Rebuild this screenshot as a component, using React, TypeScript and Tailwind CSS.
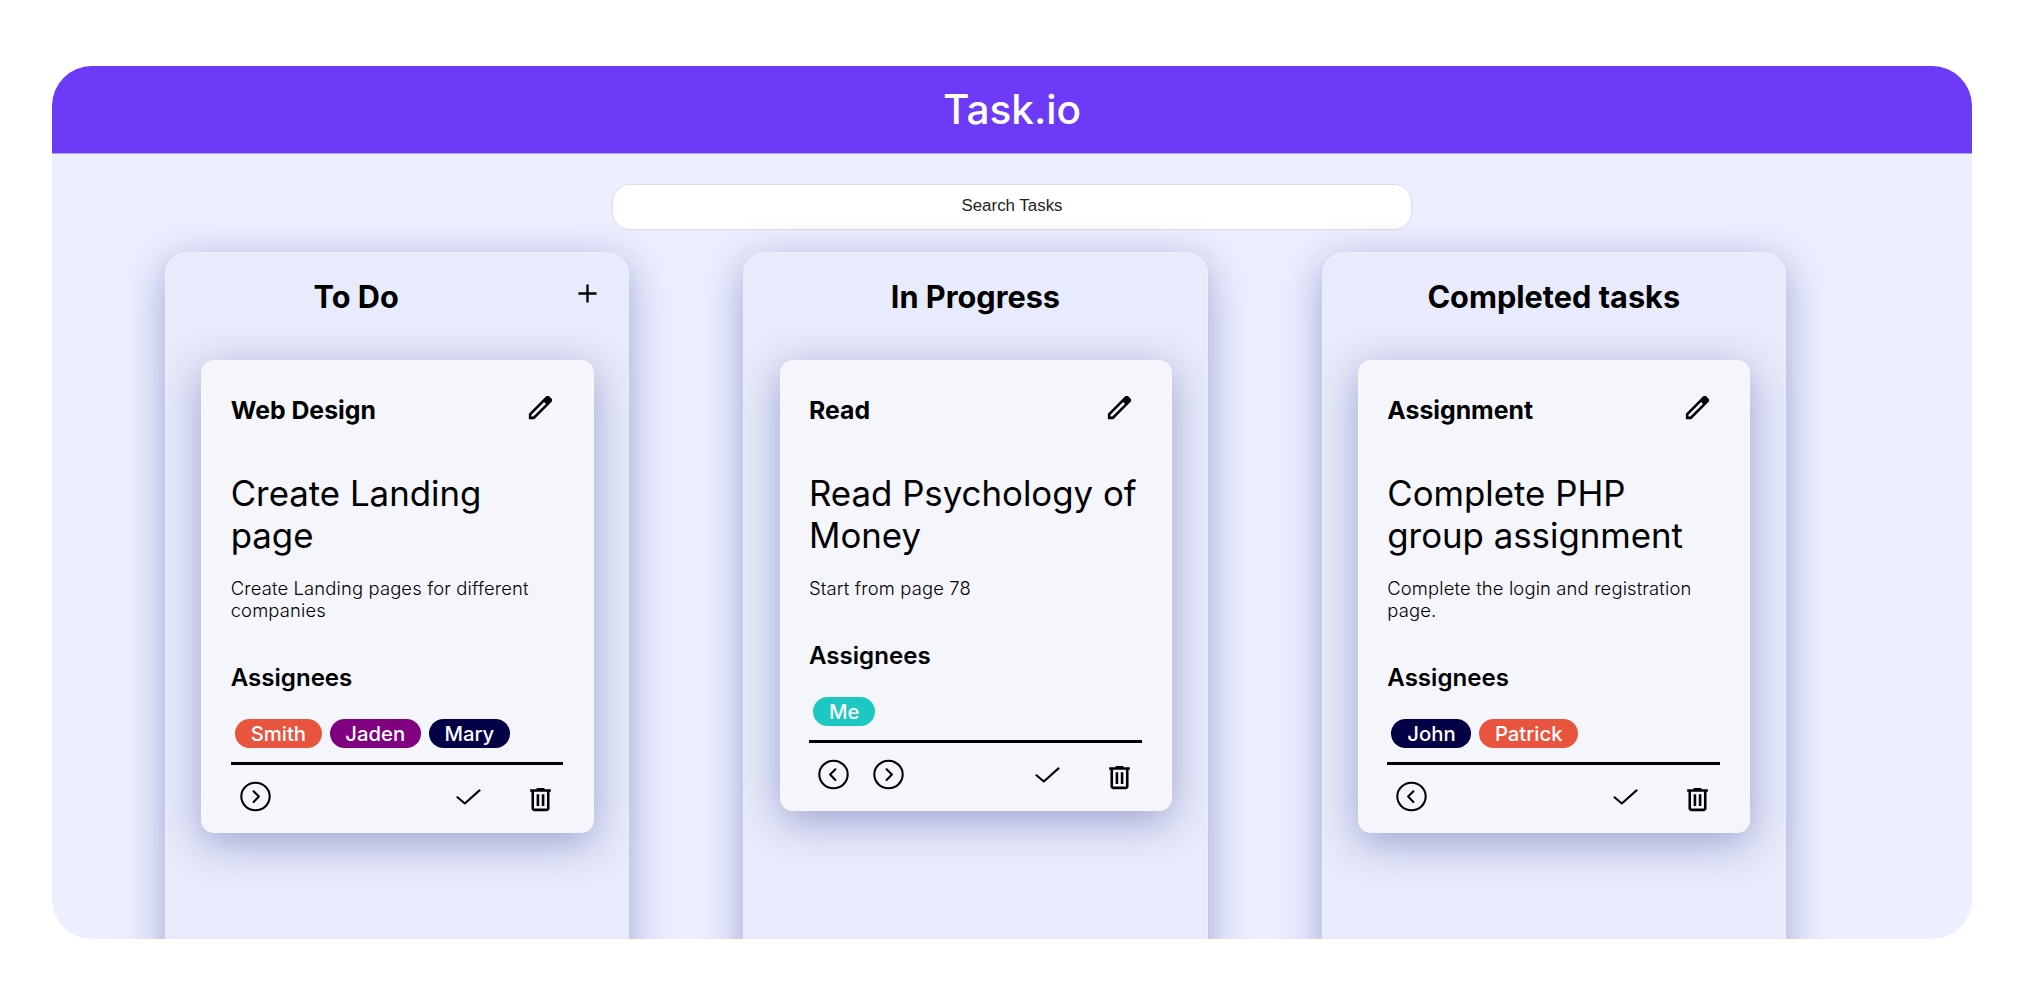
type Assignee = { name: string; tone: keyof typeof tones };
type Task = {
  category: string;
  title: string;
  details: string;
  assignees: Assignee[];
  back: boolean;
  forward: boolean;
};
type Column = { title: string; canAdd: boolean; tasks: Task[] };

const tones = {
  orange: 'bg-[#e9543f]',
  purple: 'bg-[#800080]',
  navy: 'bg-[#040045]',
  teal: 'bg-[#1cc8c1]',
};

const columns: Column[] = [
  {
    title: 'To Do',
    canAdd: true,
    tasks: [
      {
        category: 'Web Design',
        title: 'Create Landing page',
        details: 'Create Landing pages for different companies',
        assignees: [
          { name: 'Smith', tone: 'orange' },
          { name: 'Jaden', tone: 'purple' },
          { name: 'Mary', tone: 'navy' },
        ],
        back: false,
        forward: true,
      },
    ],
  },
  {
    title: 'In Progress',
    canAdd: false,
    tasks: [
      {
        category: 'Read',
        title: 'Read Psychology of Money',
        details: 'Start from page 78',
        assignees: [{ name: 'Me', tone: 'teal' }],
        back: true,
        forward: true,
      },
    ],
  },
  {
    title: 'Completed tasks',
    canAdd: false,
    tasks: [
      {
        category: 'Assignment',
        title: 'Complete PHP group assignment',
        details: 'Complete the login and registration page.',
        assignees: [
          { name: 'John', tone: 'navy' },
          { name: 'Patrick', tone: 'orange' },
        ],
        back: true,
        forward: false,
      },
    ],
  },
];

function PlusIcon() {
  return (
    <svg className="size-[31px]" viewBox="0 0 24 24" fill="currentColor">
      <path d="M11.1 12.9H5v-1.8h6.1V5h1.8v6.1H19v1.8h-6.1V19h-1.8z" />
    </svg>
  );
}

function EditIcon() {
  return (
    <svg className="size-[31px]" viewBox="0 0 24 24" fill="currentColor">
      <path d="M5 19h1.4l9.8-9.775L14.775 7.8L5 17.575zm-2 2v-4.25L16.2 3.575q.3-.275.663-.425t.762-.15t.775.15t.65.45L20.425 5q.3.275.438.65T21 6.4q0 .4-.137.763t-.438.662L7.25 21z" />
    </svg>
  );
}

function TrashIcon() {
  return (
    <svg className="size-[31px]" viewBox="0 0 24 24" fill="currentColor">
      <path d="M7 21q-.825 0-1.412-.587T5 19V6H4V4h5V3h6v1h5v2h-1v13q0 .825-.587 1.413T17 21zM17 6H7v13h10zM9 17h2V8H9zm4 0h2V8h-2z" />
    </svg>
  );
}

function CheckIcon() {
  return (
    <svg
      className="h-4 w-[25px]"
      viewBox="0 0 25 16"
      fill="none"
      stroke="currentColor"
      strokeWidth="2.1"
      strokeLinecap="round"
      strokeLinejoin="round"
    >
      <path d="M1.5 8.3 8.8 14.5 23.5 1.4" />
    </svg>
  );
}

function ArrowIcon({ direction }: { direction: 'left' | 'right' }) {
  return (
    <svg
      className="size-[31px]"
      viewBox="0 0 31 31"
      fill="none"
      stroke="currentColor"
      strokeWidth="2.1"
      strokeLinecap="round"
      strokeLinejoin="round"
    >
      <ellipse cx="15.5" cy="15.5" rx="14.2" ry="13.7" />
      <path d={direction === 'right' ? 'M13.6 10.3 18.9 15.6 13.6 20.9' : 'M17.4 10.3 12.1 15.6 17.4 20.9'} />
    </svg>
  );
}

function TaskCard({ task }: { task: Task }) {
  return (
    <article className="rounded-[13px] border border-white/20 bg-[#f5f6fc] pt-[31px] pr-[29.5px] pb-[17px] pl-[28.4px] shadow-[0_10px_41px_0_rgba(31,38,135,0.37)]">
      <div className="flex h-[31px] items-start justify-between pr-[7px]">
        <h3 className="pt-[3px] text-[24.8px] leading-[31px] font-bold">{task.category}</h3>
        <EditIcon />
      </div>
      <h2 className="mt-[49px] text-[34.8px] leading-[42px]">{task.title}</h2>
      <p className="mt-[22px] text-[18.4px] leading-[21.5px] font-light tracking-[0.15px]">{task.details}</p>
      <h4 className="mt-[42.5px] text-[24.1px] leading-7 font-semibold">Assignees</h4>
      <div className="mt-[27px] flex gap-[7.7px] pl-[4.2px]">
        {task.assignees.map((person) => (
          <span
            key={person.name}
            className={`rounded-full px-[15.8px] text-[20.3px] leading-[29px] font-medium text-white ${tones[person.tone]}`}
          >
            {person.name}
          </span>
        ))}
      </div>
      <div className="mt-[14px] h-[3px] bg-black" />
      <div className="mt-4 flex h-[34px] items-start pr-[7px] pl-[9px]">
        <div className="flex gap-6">
          {task.back && <ArrowIcon direction="left" />}
          {task.forward && <ArrowIcon direction="right" />}
        </div>
        <div className="ml-auto flex items-start gap-11">
          <div className="pt-2">
            <CheckIcon />
          </div>
          <div className="pt-[3px]">
            <TrashIcon />
          </div>
        </div>
      </div>
    </article>
  );
}

function BoardColumn({ column }: { column: Column }) {
  return (
    <section className="h-[760px] w-[464.3px] shrink-0 rounded-[22px] border border-white/20 bg-[#e8ebfb] pt-[25px] shadow-[0_10px_41px_0_rgba(31,38,135,0.37)]">
      <div className="flex h-[38px] items-center">
        <h1 className="flex-1 text-center text-[30.7px] leading-[38px] font-bold">{column.title}</h1>
        {column.canAdd && (
          <div className="flex w-[82px] justify-center pb-[8px]">
            <PlusIcon />
          </div>
        )}
      </div>
      <div className="mt-11 pr-[34.5px] pl-[35.3px]">
        {column.tasks.map((task) => (
          <TaskCard key={task.category} task={task} />
        ))}
      </div>
    </section>
  );
}

export default function App() {
  return (
    <div className="h-[985px] bg-white px-[52px] pt-[66px] font-['Inter',sans-serif] text-black">
      <main className="h-[873px] w-[1920px] overflow-hidden rounded-[40px] bg-[#ecefff]">
        <header className="flex h-[88px] items-center justify-center border-b border-[#b9a4fb] bg-[#6d3af8] pt-[2px] text-[40.6px] font-medium text-white">
          Task.io
        </header>
        <input
          type="text"
          placeholder="Search Tasks"
          className="mx-auto mt-[30px] block h-[46px] w-[800px] rounded-[18px] border border-[#dddde2] bg-white pb-[3px] text-center font-['Liberation_Sans',sans-serif] text-[16.9px] placeholder:text-[#222]"
        />
        <div className="mt-[22px] flex gap-[114px] pl-[113px]">
          {columns.map((column) => (
            <BoardColumn key={column.title} column={column} />
          ))}
        </div>
      </main>
    </div>
  );
}
